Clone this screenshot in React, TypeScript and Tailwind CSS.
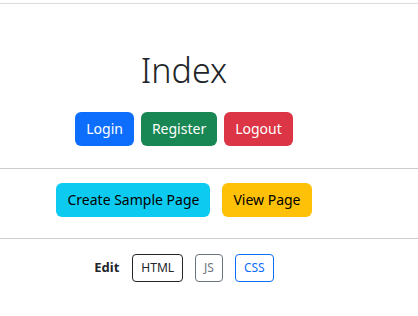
import React from "react";

const font = { fontFamily: '"Noto Sans", "Open Sans", sans-serif' };

function Btn({ label, className }: { label: string; className: string }) {
  return (
    <button
      className={`h-[34px] px-[11px] rounded-[6px] text-[14px] leading-none ${className}`}
    >
      {label}
    </button>
  );
}

function SmallBtn({ label, className }: { label: string; className: string }) {
  return (
    <button
      className={`h-[28px] px-[8px] rounded-[4px] border text-[12px] leading-none bg-white ${className}`}
    >
      {label}
    </button>
  );
}

export default function App() {
  return (
    <div className="w-[418px] h-[316px] bg-white text-[#212529] overflow-hidden" style={font}>
      <div className="pt-[3px]">
        <div className="h-px bg-[#dcdcdc]" />
      </div>

      {/* header */}
      <div className="pr-[50px] flex flex-col items-center">
        <h1 className="mt-[46px] text-[34px] leading-[41px] font-light">Index</h1>
        <div className="mt-[21px] flex gap-[7px]">
          <Btn label="Login" className="bg-[#0d6efd] text-white" />
          <Btn label="Register" className="bg-[#198754] text-white" />
          <Btn label="Logout" className="bg-[#dc3545] text-white" />
        </div>
      </div>

      <div className="mt-[22px] h-px bg-[#cccccc]" />

      <div className="pr-[50px] py-[14px] flex justify-center gap-[12px]">
        <Btn label="Create Sample Page" className="bg-[#0dcaf0] text-black" />
        <Btn label="View Page" className="bg-[#ffc107] text-black" />
      </div>

      <div className="mt-[7px] h-px bg-[#cccccc]" />

      <div className="pr-[50px] mt-[15px] flex justify-center items-center gap-[12px]">
        <span className="text-[13px] font-bold mr-px">Edit</span>
        <SmallBtn label="HTML" className="border-[#212529] text-[#212529]" />
        <SmallBtn label="JS" className="border-[#6c757d] text-[#6c757d]" />
        <SmallBtn label="CSS" className="border-[#0d6efd] text-[#0d6efd]" />
      </div>
    </div>
  );
}
